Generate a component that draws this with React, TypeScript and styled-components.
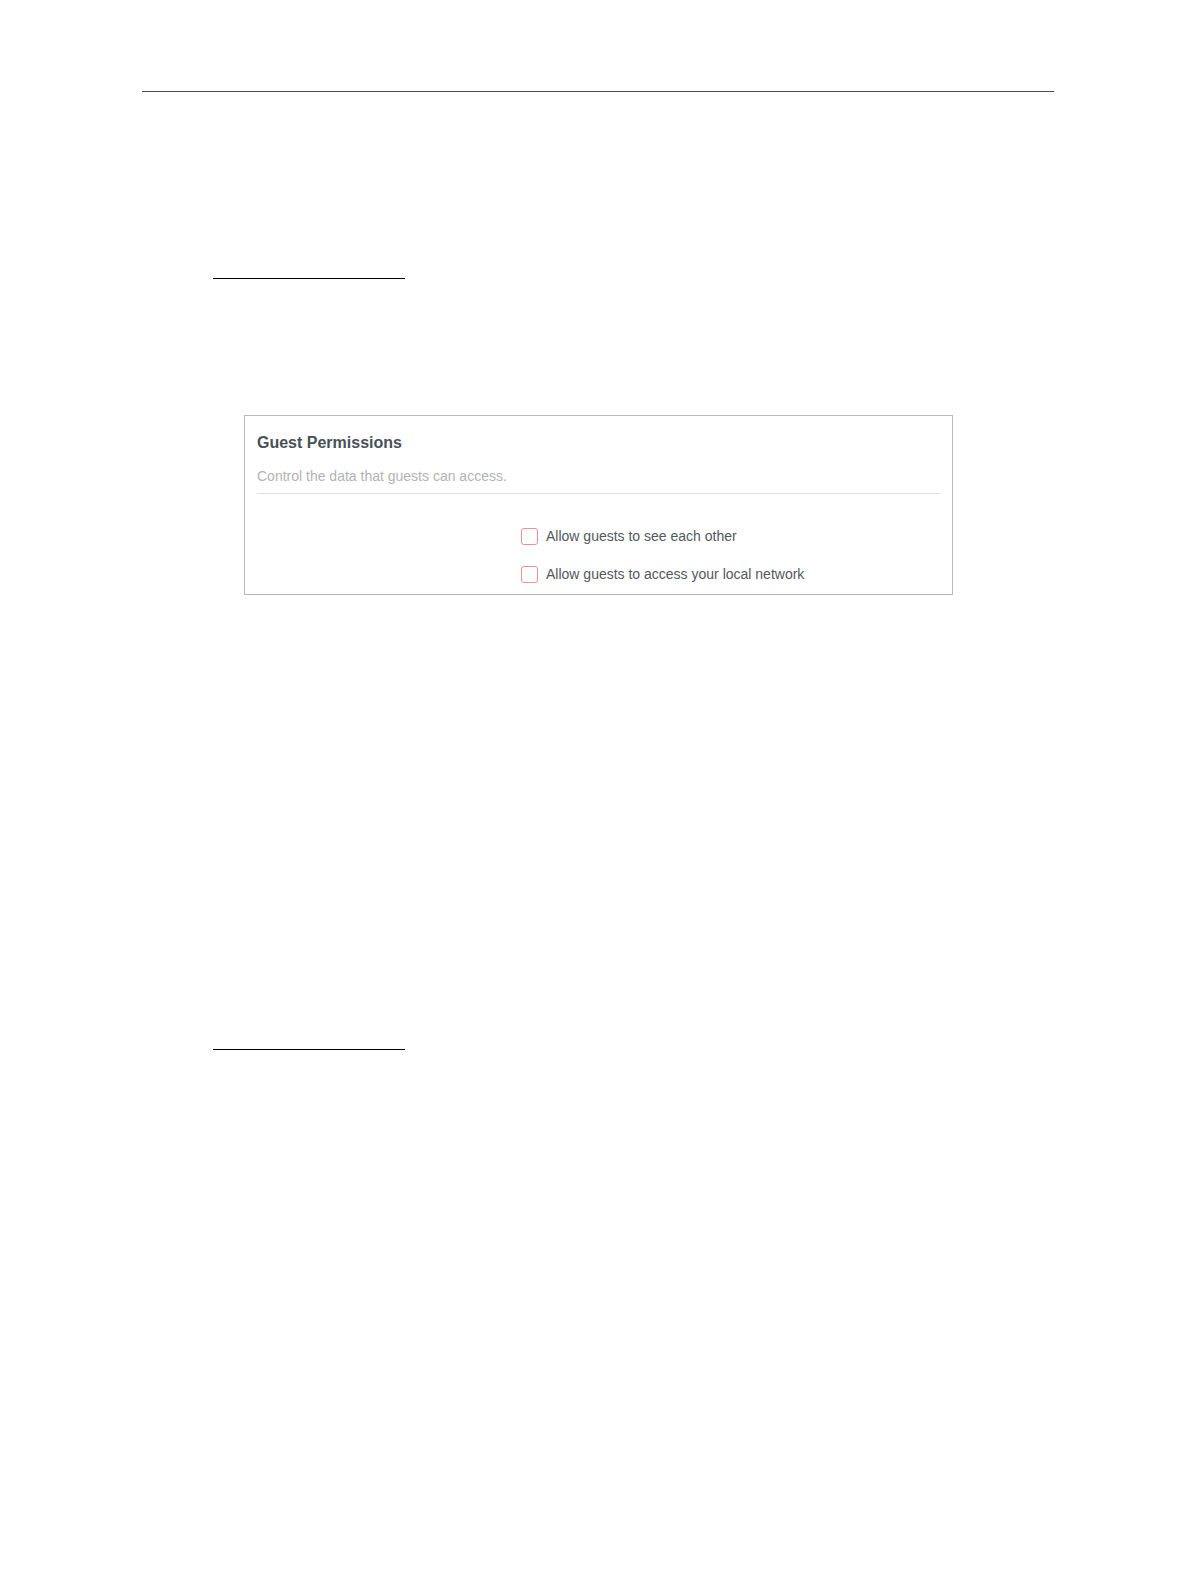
import React, { useState } from "react";
import styled, { createGlobalStyle } from "styled-components";

const GlobalStyle = createGlobalStyle`
  *, *::before, *::after {
    box-sizing: border-box;
  }
  body {
    margin: 0;
    background: #ffffff;
    font-family: "Liberation Sans", Arial, sans-serif;
  }
`;

const Page = styled.main`
  min-height: 100vh;
  padding: 91px 142px 0;
`;

const PageRule = styled.hr`
  margin: 0;
  border: 0;
  border-top: 1px solid #4d4d4f;
`;

const Section = styled.section<{ $space: number }>`
  padding: ${({ $space }) => $space}px 71px 0;
`;

const SectionRule = styled.hr`
  width: 192px;
  margin: 0;
  border: 0;
  border-top: 1px solid #000000;
`;

const Panel = styled.form`
  margin: 136px 30px 0 31px;
  padding: 17px 12px 10px;
  border: 1px solid #b9b9b9;
`;

const PanelHeader = styled.header`
  padding-bottom: 7px;
  border-bottom: 1px solid #dedede;
`;

const PanelTitle = styled.h2`
  margin: 0 0 13px;
  color: #485157;
  font-size: 16px;
  line-height: 20px;
`;

const PanelText = styled.p`
  margin: 0;
  color: #b3b3b3;
  font-size: 14px;
  line-height: 20px;
`;

const Options = styled.div`
  display: grid;
  gap: 18px;
  padding: 32px 0 0 264px;
`;

const Option = styled.label`
  display: flex;
  align-items: center;
  gap: 8px;
  color: #53585c;
  font-size: 14px;
  line-height: 20px;
`;

const Checkbox = styled.input`
  appearance: none;
  flex: none;
  width: 17px;
  height: 17px;
  margin: 0;
  border: 1px solid #f28e8e;
  border-radius: 3px;
  background: #ffffff;

  &:checked {
    background: #f28e8e;
    box-shadow: inset 0 0 0 3px #ffffff;
  }
`;

const permissions = [
  { id: "see-each-other", label: "Allow guests to see each other" },
  { id: "local-network", label: "Allow guests to access your local network" },
];

export default function App() {
  const [allowed, setAllowed] = useState<Record<string, boolean>>({});

  return (
    <>
      <GlobalStyle />
      <Page>
        <PageRule />
        <Section $space={186}>
          <SectionRule />
          <Panel>
            <PanelHeader>
              <PanelTitle>Guest Permissions</PanelTitle>
              <PanelText>Control the data that guests can access.</PanelText>
            </PanelHeader>
            <Options>
              {permissions.map(({ id, label }) => (
                <Option key={id} htmlFor={id}>
                  <Checkbox
                    type="checkbox"
                    id={id}
                    checked={Boolean(allowed[id])}
                    onChange={(event) =>
                      setAllowed({ ...allowed, [id]: event.target.checked })
                    }
                  />
                  {label}
                </Option>
              ))}
            </Options>
          </Panel>
        </Section>
        <Section $space={454}>
          <SectionRule />
        </Section>
      </Page>
    </>
  );
}
